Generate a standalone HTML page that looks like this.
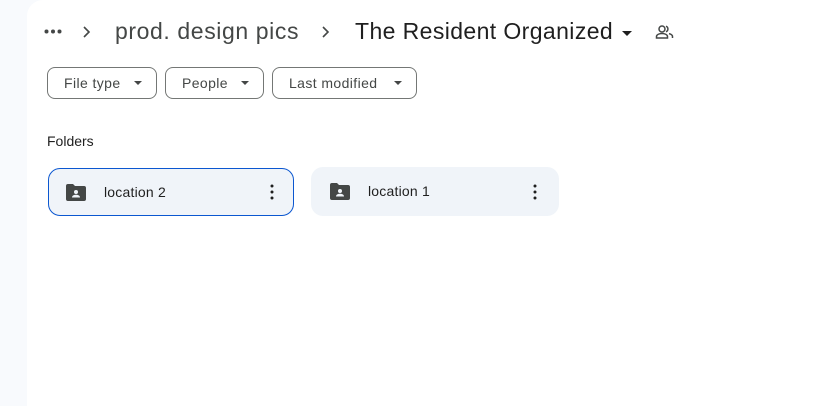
<!DOCTYPE html>
<html><head><style>
body{margin:0;width:827px;height:406px;background:#f8fafd;font-family:"Liberation Sans",sans-serif;position:relative;overflow:hidden}
.main{position:absolute;left:27px;top:0;right:0;bottom:0;background:#fff;border-top-left-radius:16px}
.a{position:absolute;white-space:nowrap}
.chip{position:absolute;top:67px;height:30px;border:1px solid #747775;border-radius:8px;font-size:14px;color:#444746;line-height:30px;box-sizing:content-box;letter-spacing:.4px}
.chip span{position:absolute;left:16px}
.tri{position:absolute;top:13px;width:0;height:0;border-left:4px solid transparent;border-right:4px solid transparent;border-top:4px solid #444746}
.card{position:absolute;top:167px;height:48px;border-radius:12px;background:#f0f4f9;box-sizing:border-box}
.card .t{position:absolute;left:56px;top:16px;font-size:14px;color:#1f1f1f;letter-spacing:.2px}
.card svg{position:absolute}
</style></head><body>
<div class="main"></div>
<svg class="a" style="left:44px;top:29px" width="18" height="5"><circle cx="2.5" cy="2.5" r="2" fill="#444746"/><circle cx="9" cy="2.5" r="2" fill="#444746"/><circle cx="15.5" cy="2.5" r="2" fill="#444746"/></svg>
<svg class="a" style="left:80px;top:25px" width="14" height="14" viewBox="0 0 14 14"><path d="M4 2l5 5-5 5" fill="none" stroke="#444746" stroke-width="1.6"/></svg>
<div class="a" style="left:115px;top:18px;font-size:23px;color:#444746;letter-spacing:.6px">prod. design pics</div>
<svg class="a" style="left:319px;top:25px" width="14" height="14" viewBox="0 0 14 14"><path d="M4 2l5 5-5 5" fill="none" stroke="#444746" stroke-width="1.6"/></svg>
<div class="a" style="left:355px;top:18px;font-size:23px;color:#1f1f1f;letter-spacing:.4px">The Resident Organized</div>
<div class="a" style="left:622px;top:31px;border-left:5px solid transparent;border-right:5px solid transparent;border-top:5px solid #1f1f1f"></div>
<svg class="a" style="left:655px;top:24px" width="20" height="16" viewBox="0 0 20 16"><circle cx="7" cy="5" r="3" fill="none" stroke="#444746" stroke-width="1.5"/><path d="M1.5 14v-1.5c0-2 3-3 5.5-3s5.5 1 5.5 3V14z" fill="none" stroke="#444746" stroke-width="1.5"/><path d="M11 2.2a3 3 0 010 5.6M14 9.6c2 .5 3.5 1.5 3.5 3V14" fill="none" stroke="#444746" stroke-width="1.5"/></svg>
<div class="chip" style="left:47px;width:108px"><span>File type</span><div class="tri" style="left:86px"></div></div>
<div class="chip" style="left:165px;width:97px"><span>People</span><div class="tri" style="left:75px"></div></div>
<div class="chip" style="left:272px;width:143px"><span>Last modified</span><div class="tri" style="left:121px"></div></div>
<div class="a" style="left:47px;top:133px;font-size:14px;color:#1f1f1f">Folders</div>
<div class="card" style="left:48px;width:246px;top:168px;border:1px solid #0b57d0"><svg style="left:17px;top:15px" width="20" height="17" viewBox="0 0 20 17"><path d="M0 2a2 2 0 012-2h5l2 2h9a2 2 0 012 2v11a2 2 0 01-2 2H2a2 2 0 01-2-2z" fill="#444746"/><circle cx="10" cy="8" r="2" fill="#f0f4f9"/><path d="M6 13.5c0-2 2-2.8 4-2.8s4 .8 4 2.8z" fill="#f0f4f9"/></svg><div class="t" style="left:55px;top:15px">location 2</div><svg style="left:221px;top:15px" width="4" height="16"><circle cx="2" cy="2" r="1.5" fill="#1f1f1f"/><circle cx="2" cy="8" r="1.5" fill="#1f1f1f"/><circle cx="2" cy="14" r="1.5" fill="#1f1f1f"/></svg></div>
<div class="card" style="left:311px;width:248px;height:49px"><svg style="left:19px;top:16px" width="20" height="17" viewBox="0 0 20 17"><path d="M0 2a2 2 0 012-2h5l2 2h9a2 2 0 012 2v11a2 2 0 01-2 2H2a2 2 0 01-2-2z" fill="#444746"/><circle cx="10" cy="8" r="2" fill="#f0f4f9"/><path d="M6 13.5c0-2 2-2.8 4-2.8s4 .8 4 2.8z" fill="#f0f4f9"/></svg><div class="t" style="left:57px">location 1</div><svg style="left:222px;top:17px" width="4" height="16"><circle cx="2" cy="2" r="1.5" fill="#1f1f1f"/><circle cx="2" cy="8" r="1.5" fill="#1f1f1f"/><circle cx="2" cy="14" r="1.5" fill="#1f1f1f"/></svg></div>
</body></html>
